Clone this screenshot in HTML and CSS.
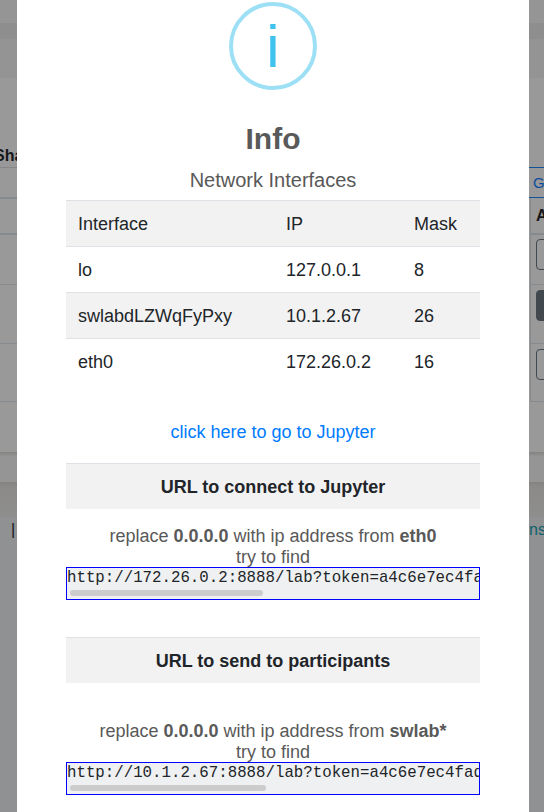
FILE: index.html
```html
<!DOCTYPE html>
<html lang="en">
<head>
<meta charset="utf-8">
<title>Info</title>
<link rel="stylesheet" href="styles.css">
</head>
<body>
<div class="page">
  <aside class="side left">
    <div class="band nav"></div>
    <div class="band crumb-top"></div>
    <div class="band crumb"></div>
    <div class="band heading"><b>Sha</b></div>
    <div class="band tabs"></div>
    <div class="band thead"></div>
    <div class="band row1"></div>
    <div class="band row2"></div>
    <div class="band row3"></div>
    <div class="band card-end"></div>
    <div class="band card-foot"></div>
    <div class="band gap"></div>
    <div class="band footer"><span>|</span></div>
  </aside>
  <main class="modal">
    <div class="icon"><span>i</span></div>
    <h2>Info</h2>
    <div class="subtitle">Network Interfaces</div>
    <table>
      <colgroup><col class="c1"><col class="c2"><col class="c3"></colgroup>
      <tr><td>Interface</td><td>IP</td><td>Mask</td></tr>
      <tr><td>lo</td><td>127.0.0.1</td><td>8</td></tr>
      <tr><td>swlabdLZWqFyPxy</td><td>10.1.2.67</td><td>26</td></tr>
      <tr><td>eth0</td><td>172.26.0.2</td><td>16</td></tr>
    </table>
    <a class="jupyter">click here to go to Jupyter</a>
    <div class="strip">URL to connect to Jupyter</div>
    <p class="hint">replace <b>0.0.0.0</b> with ip address from <b>eth0</b><br>try to find</p>
    <div class="url"><pre>http://172.26.0.2:8888/lab?token=a4c6e7ec4fa</pre><div class="thumb"></div></div>
    <div class="strip second">URL to send to participants</div>
    <p class="hint late">replace <b>0.0.0.0</b> with ip address from <b>swlab*</b><br>try to find</p>
    <div class="url"><pre>http://10.1.2.67:8888/lab?token=a4c6e7ec4fad</pre><div class="thumb wide"></div></div>
  </main>
  <aside class="side right">
    <div class="band nav"></div>
    <div class="band crumb-top"></div>
    <div class="band crumb"></div>
    <div class="band heading"></div>
    <div class="band tabs">G</div>
    <div class="band thead cell"><b>A</b></div>
    <div class="band row1 cell"><i class="btn"></i></div>
    <div class="band row2 cell"><i class="btn solid"></i></div>
    <div class="band row3 cell"><i class="btn"></i></div>
    <div class="band card-end"></div>
    <div class="band card-foot"></div>
    <div class="band gap"></div>
    <div class="band footer"><span>ns</span></div>
  </aside>
</div>
</body>
</html>
```
FILE: styles.css
```css
* { box-sizing: border-box; }
body { margin: 0; font-family: "Liberation Sans", Arial, sans-serif; }
.page { display: grid; grid-template-columns: 17px 512px 15px; height: 812px; overflow: hidden; }

.side { background: #999; color: #151719; font-size: 16px; line-height: 24px; overflow: hidden; }
.band { overflow: hidden; white-space: nowrap; }
.nav { height: 23px; background: #959595; }
.crumb-top { height: 16px; background: #8e8e8e; }
.crumb { height: 39px; background: #949494; }
.heading { height: 90px; border-bottom: 1px solid #858789; padding-top: 66px; }
.heading b { margin-left: -6px; }
.tabs { height: 31px; border-bottom: 2px solid #858a8e; }
.thead { height: 36px; border-bottom: 2px solid #858a8e; }
.row1 { height: 50px; border-bottom: 1px solid #858a8e; }
.row2 { height: 59px; border-bottom: 1px solid #858a8e; }
.row3 { height: 58px; border-bottom: 1px solid #858a8e; }
.card-end { height: 50px; }
.card-foot { height: 30px; background: linear-gradient(#868482, #8f8e8d 3px, #959595 4px); }
.gap { height: 35px; background: linear-gradient(#838280, #8b8a89 4px, #8e8e8d); }
.footer { height: 295px; background: #8f9192; padding-top: 1px; }
.left .footer span { margin-left: 11px; }

.right .heading { border-color: #10519a; }
.right .tabs { height: 30px; border-bottom: 1px solid #10519a; padding: 3px 0 0 4px; color: #0d4d9c; font-size: 15px; }
.right .thead { height: 37px; padding: 6px 0 0 5px; }
.cell { border-left: 1px solid #858a8e; margin-left: 1px; }
.btn { display: block; width: 20px; height: 31px; margin: 4px 0 0 5px; border: 1px solid #41484e; border-radius: 4px; }
.row2 .btn, .row3 .btn { margin-top: 5px; }
.solid { background: #41484e; }
.right .footer { color: #0e616e; }

.modal { background: #fff; padding: 2px 49px 0; color: #595959; font-size: 18px; line-height: 21px; text-align: center; overflow: hidden; }
.icon { width: 88px; height: 88px; margin: 0 auto; border: 4px solid #9de0f6; border-radius: 50%; color: #3fc3ee; font-size: 60px; line-height: 82px; }
h2 { margin: 32px 0 0; font-size: 30px; line-height: 34px; }
.subtitle { margin-top: 12px; height: 32px; font-size: 20px; line-height: 24px; }
table { width: 414px; table-layout: fixed; border-collapse: separate; border-spacing: 0; color: #212529; text-align: left; }
.c1 { width: 208px; }
.c2 { width: 128px; }
td { height: 46px; padding: 13px 12px 11px; border-top: 1px solid #dee2e6; line-height: 21px; }
tr:nth-child(odd) { background: #f2f2f2; }
.jupyter { display: block; margin-top: 38px; color: #007bff; }
.strip { height: 46px; margin-top: 20px; padding-top: 13px; border-top: 1px solid #dee2e6; background: #f2f2f2; color: #212529; font-weight: bold; }
.hint { margin: 17px 0 -1px; }
.second { margin-top: 37px; }
.late { margin-top: 38px; }
.url { height: 33px; border: 1px solid #00f; background: #eff0f1; overflow: hidden; text-align: left; }
pre { margin: 0; height: 22px; font: 15.75px/20px "Liberation Mono", monospace; color: #212529; overflow: hidden; }
.thumb { width: 193px; height: 6px; margin-left: 3px; border-radius: 3px; background: #ccc; }
.wide { width: 196px; }
```
